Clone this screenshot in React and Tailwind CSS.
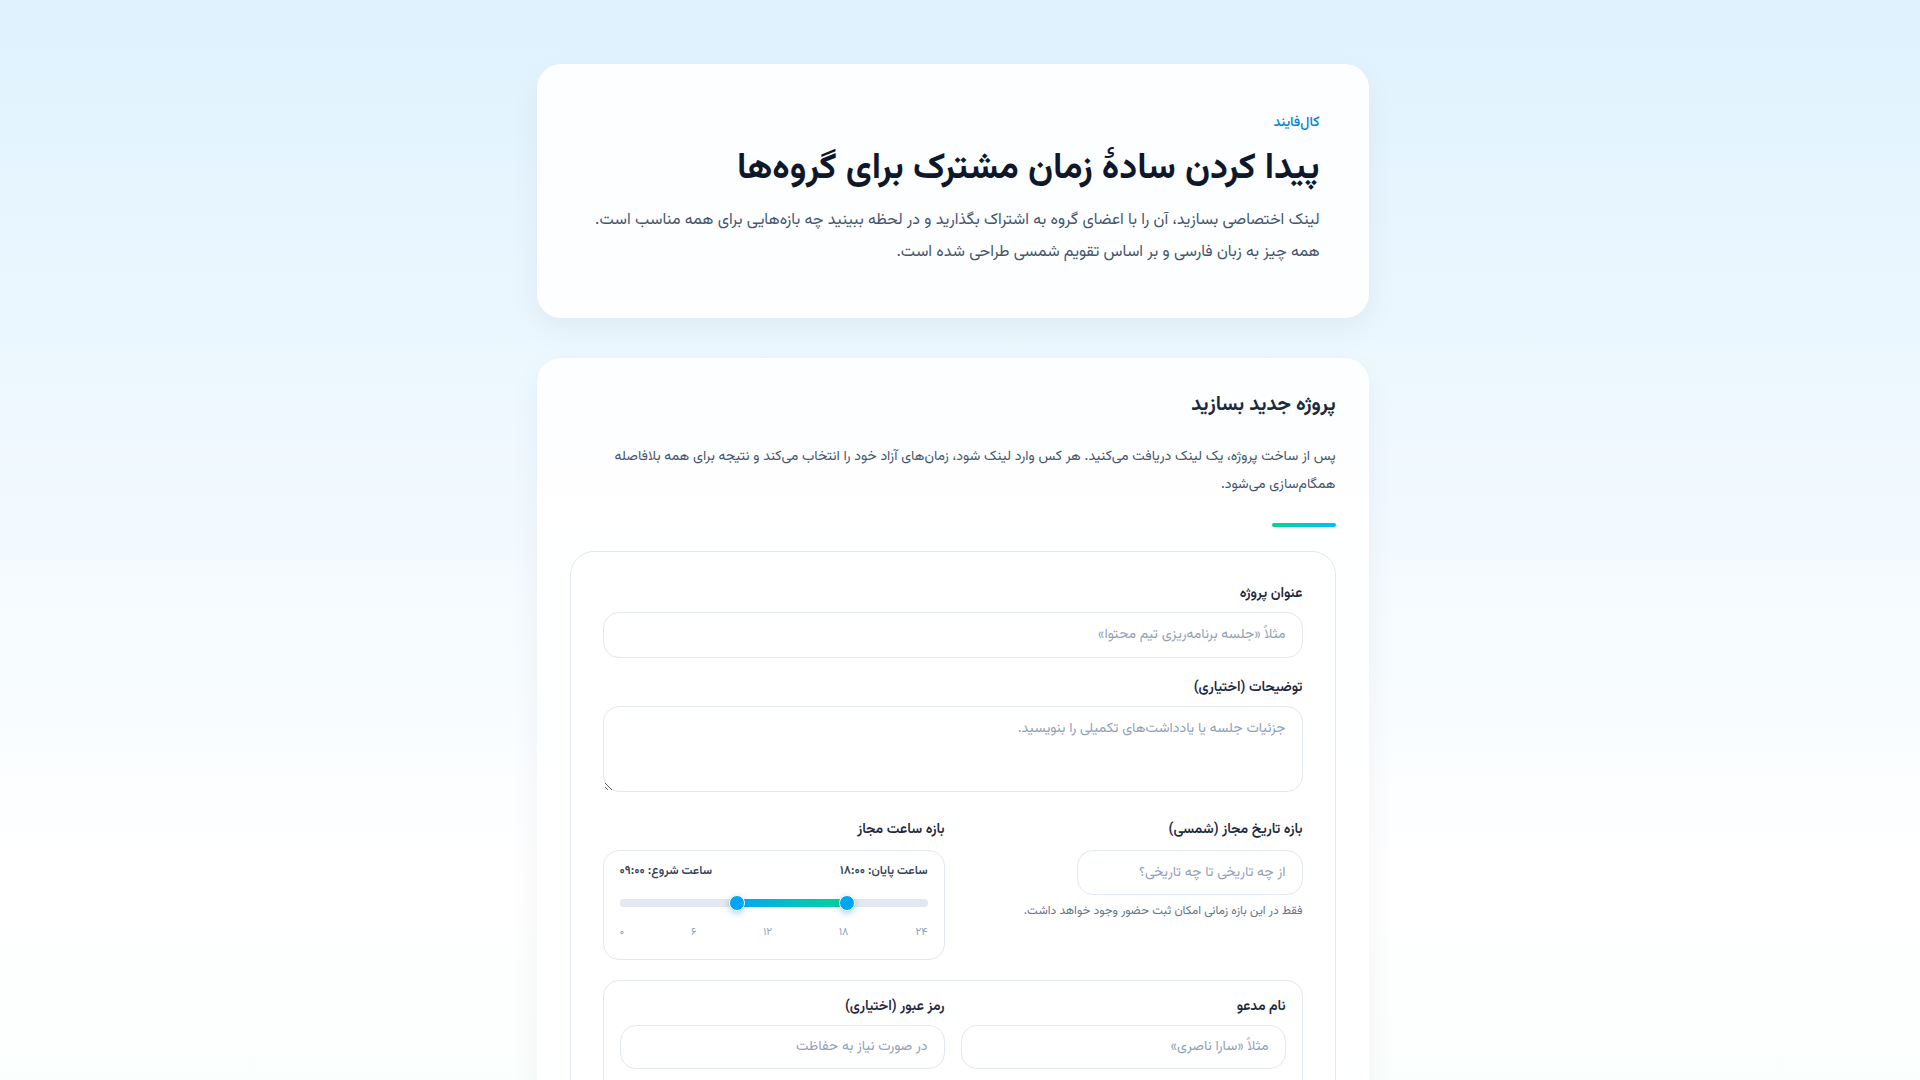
import React from "react";

const hours = { start: 9, end: 18, max: 24 };
const ticks = ["۰", "۶", "۱۲", "۱۸", "۲۴"];

const Label = ({ children }) => (
  <label className="block text-sm font-semibold leading-5 text-slate-800">
    {children}
  </label>
);

const inputCls =
  "block w-full rounded-2xl border border-slate-200 bg-white px-4 text-sm text-slate-700 outline-none placeholder:text-slate-400";

const TimeRange = () => {
  const startPct = (hours.start / hours.max) * 100;
  const endPct = (hours.end / hours.max) * 100;

  return (
    <div className="mt-2.5 rounded-2xl border border-slate-200 bg-white px-4 pt-3 pb-[18px]">
      <div className="flex justify-between text-xs font-semibold leading-4 text-slate-700">
        <span>ساعت پایان: ۱۸:۰۰</span>
        <span>ساعت شروع: ۰۹:۰۰</span>
      </div>
      <div dir="ltr" className="mt-4 px-2">
        <div className="relative h-4">
          <div className="absolute -left-2 -right-2 top-1 h-2 rounded-full bg-slate-200" />
          <div
            className="absolute top-1 h-2 bg-gradient-to-r from-sky-500 to-emerald-400"
            style={{ left: `${startPct}%`, right: `${100 - endPct}%` }}
          />
          <div
            className="absolute top-0 h-4 w-4 -translate-x-1/2 rounded-full border border-white bg-sky-500 shadow-[0_2px_6px_rgba(2,132,199,0.35)]"
            style={{ left: `${startPct}%` }}
          />
          <div
            className="absolute top-0 h-4 w-4 -translate-x-1/2 rounded-full border border-white bg-sky-500 shadow-[0_2px_6px_rgba(2,132,199,0.35)]"
            style={{ left: `${endPct}%` }}
          />
        </div>
      </div>
      <div dir="ltr" className="mt-3.5 flex justify-between text-[11px] leading-4 text-slate-400">
        {ticks.map((t) => (
          <span key={t}>{t}</span>
        ))}
      </div>
    </div>
  );
};

const steps = [
  ["۱", "پروژه را بسازید", "عنوان، بازه تاریخ و ساعت را مشخص کنید."],
  ["۲", "لینک را بفرستید", "لینک را برای اعضای گروه ارسال کنید."],
  ["۳", "زمان مشترک را ببینید", "بهترین بازه برای همه نمایش داده می‌شود."],
];

export default function App() {
  return (
    <div
      dir="rtl"
      className="min-h-screen bg-gradient-to-b from-sky-100 via-white to-emerald-50 pr-[15px] font-[Vazirmatn,'Noto_Sans_Arabic','DejaVu_Sans',sans-serif]"
    >
      <div className="mx-auto flex max-w-[832px] flex-col gap-10 pt-16 pb-20">
        {/* hero */}
        <section className="rounded-3xl border border-white bg-white/90 p-12 shadow-[0_12px_32px_rgba(15,23,42,0.05)]">
          <p className="text-sm font-medium leading-5 text-sky-600">کال‌فایند</p>
          <h1 className="mt-4 text-4xl font-bold leading-10 text-slate-900">
            پیدا کردن سادهٔ زمان مشترک برای گروه‌ها
          </h1>
          <p className="mt-4 text-base leading-8 text-slate-600">
            لینک اختصاصی بسازید، آن را با اعضای گروه به اشتراک بگذارید و در لحظه ببینید چه بازه‌هایی برای همه مناسب است.
            <br />
            همه چیز به زبان فارسی و بر اساس تقویم شمسی طراحی شده است.
          </p>
        </section>

        {/* new project */}
        <section className="rounded-3xl border border-white bg-white/90 p-8 shadow-[0_12px_32px_rgba(15,23,42,0.05)]">
          <h2 className="text-xl font-bold leading-7 text-slate-800">پروژه جدید بسازید</h2>
          <p className="mt-6 text-sm leading-7 text-slate-600">
            پس از ساخت پروژه، یک لینک دریافت می‌کنید. هر کس وارد لینک شود، زمان‌های آزاد خود را انتخاب می‌کند و نتیجه برای همه بلافاصله همگام‌سازی می‌شود.
          </p>
          <div className="mt-6 h-1 w-16 rounded-full bg-gradient-to-r from-emerald-400 to-sky-400" />

          <form className="mt-6 rounded-3xl border border-slate-200 bg-white p-8">
            <div>
              <Label>عنوان پروژه</Label>
              <input
                className={"mt-2 h-[46px] " + inputCls}
                placeholder="مثلاً «جلسه برنامه‌ریزی تیم محتوا»"
              />
            </div>

            <div className="mt-5">
              <Label>توضیحات (اختیاری)</Label>
              <textarea
                rows={3}
                className={"mt-2 py-3 leading-5 " + inputCls}
                placeholder="جزئیات جلسه یا یادداشت‌های تکمیلی را بنویسید."
              />
            </div>

            <div className="mt-7 grid grid-cols-2 gap-4">
              <div>
                <Label>بازه تاریخ مجاز (شمسی)</Label>
                <input
                  className="mt-2.5 block h-[45px] w-[226px] rounded-2xl border border-slate-200 bg-white px-4 text-sm outline-none placeholder:text-slate-400"
                  placeholder="از چه تاریخی تا چه تاریخی؟"
                />
                <p className="mt-2 text-xs leading-4 text-slate-500">
                  فقط در این بازه زمانی امکان ثبت حضور وجود خواهد داشت.
                </p>
              </div>
              <div>
                <Label>بازه ساعت مجاز</Label>
                <TimeRange />
              </div>
            </div>

            <div className="mt-5 rounded-2xl border border-slate-200 bg-white p-4">
              <div className="grid grid-cols-2 gap-4">
                <div>
                  <Label>نام مدعو</Label>
                  <input className={"mt-2 h-[44px] " + inputCls} placeholder="مثلاً «سارا ناصری»" />
                </div>
                <div>
                  <Label>رمز عبور (اختیاری)</Label>
                  <input className={"mt-2 h-[44px] " + inputCls} placeholder="در صورت نیاز به حفاظت" />
                </div>
              </div>
              <button
                type="button"
                className="mt-4 h-11 rounded-2xl border border-sky-200 bg-sky-50 px-5 text-sm font-semibold text-sky-700"
              >
                افزودن مدعو
              </button>
              <p className="mt-3 text-xs leading-5 text-slate-500">هنوز مدعوی اضافه نشده است.</p>
            </div>

            <button
              type="button"
              className="mt-8 h-12 w-full rounded-2xl bg-gradient-to-r from-emerald-500 to-sky-500 text-base font-bold text-white shadow-[0_8px_20px_rgba(14,165,233,0.25)]"
            >
              ساخت پروژه و دریافت لینک
            </button>
          </form>
        </section>

        <section className="rounded-3xl border border-white bg-white/90 p-8 shadow-[0_12px_32px_rgba(15,23,42,0.05)]">
          <h2 className="text-xl font-bold leading-7 text-slate-800">چطور کار می‌کند؟</h2>
          <div className="mt-6 grid grid-cols-3 gap-4">
            {steps.map(([n, t, d]) => (
              <div key={n} className="rounded-2xl border border-slate-200 bg-white p-5">
                <span className="flex h-8 w-8 items-center justify-center rounded-full bg-sky-100 text-sm font-bold text-sky-700">
                  {n}
                </span>
                <p className="mt-3 text-sm font-semibold text-slate-800">{t}</p>
                <p className="mt-1 text-xs leading-5 text-slate-500">{d}</p>
              </div>
            ))}
          </div>
        </section>

        <p className="text-center text-xs text-slate-400">کال‌فایند — هماهنگی ساده زمان جلسات گروهی</p>
      </div>
    </div>
  );
}
